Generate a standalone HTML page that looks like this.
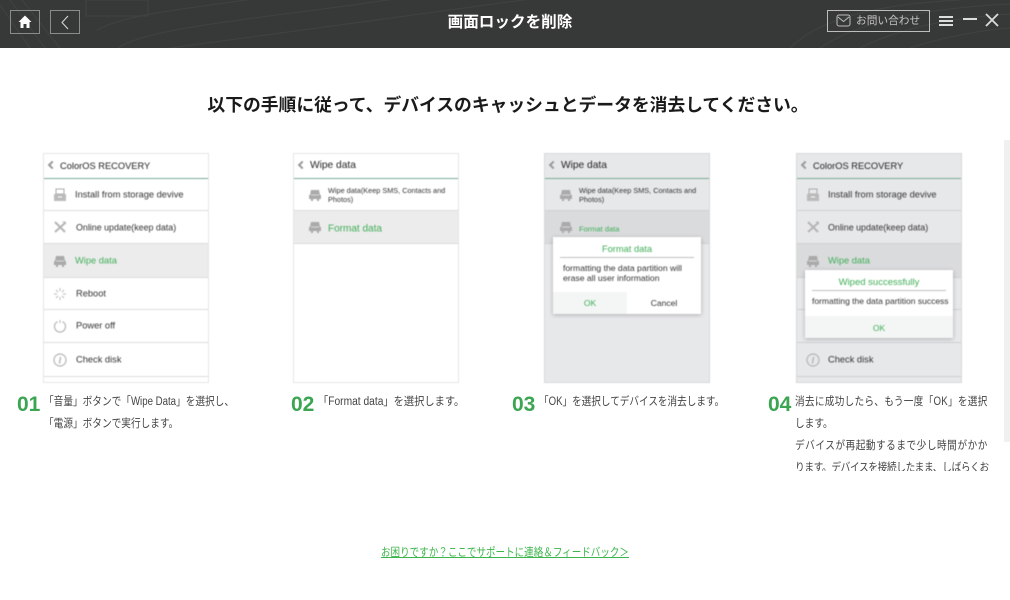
<!DOCTYPE html>
<html lang="ja"><head><meta charset="utf-8"><title>画面ロックを削除</title>
<style>
html,body{margin:0;padding:0;background:#fff}
body{width:1010px;height:600px;position:relative;overflow:hidden;font-family:"Liberation Sans","Noto Sans CJK JP",sans-serif;color:#333}
.a{position:absolute;white-space:nowrap}
.hdr{left:0;top:0;width:1010px;height:48px;background:#373938;overflow:hidden}
.btn{position:absolute;box-sizing:border-box;border:1px solid #8a8c8b;height:24px;top:10px;width:30px}
.ph{position:absolute;top:153px;width:166px;height:230px;box-sizing:border-box;border:1px solid #e6e6e6;background:#fff;overflow:hidden;filter:blur(.4px)}
.ph.g{background:#e7e8ea;border-color:#d8d9da}
.hd{position:absolute;left:0;right:0;top:0;height:24px;border-bottom:1px solid #79aa94}
.hd b{position:absolute;font-weight:400;left:16px;top:5px;font-size:9.300px;line-height:14px;color:#222;white-space:nowrap}
.hd i{position:absolute;left:5px;top:8px;width:4px;height:4px;border-left:2px solid #999;border-bottom:2px solid #999;transform:rotate(45deg)}
.r{position:absolute;left:0;right:0;border-bottom:1px solid #dcdcdc;box-sizing:border-box}
.r span{position:absolute;left:31px;top:50%;transform:translateY(-50%);font-size:9.300px;line-height:11px;color:#333;white-space:nowrap}
.r.on{background:#ececec}
.g .r{border-color:#cfd0d2}
.g .r.on{background:#dadbdd}
.r.on span{color:#3fae57;font-weight:400}
.r svg{position:absolute;left:9px;top:50%;margin-top:-7px}
.dlg{position:absolute;background:#fff;box-shadow:0 1px 4px rgba(0,0,0,.25)}
.dlg .t{position:absolute;left:0;right:0;text-align:center;color:#3fae57;font-size:9.300px;top:4px;line-height:14px}
.dlg .l{position:absolute;left:7px;right:7px;height:1px;background:#bfbfbf}
.dlg .m{position:absolute;font-size:8.600px;line-height:10px;color:#333;white-space:nowrap}
.dlg .o{position:absolute;background:#f4f6f5;color:#3fae57;font-size:8.500px;text-align:center}
.dlg .c{position:absolute;color:#333;font-size:8.500px;text-align:center}
.n{position:absolute;font-size:21px;font-weight:700;color:#3ba551;line-height:26px}
.s{position:absolute;font-size:11.500px;line-height:22px;color:#444;white-space:nowrap;transform-origin:0 0}
</style></head><body>
<svg width="0" height="0" style="position:absolute"><defs>
<symbol id="disk" viewBox="0 0 14 14"><path d="M3 2h8l1 5H2zM1 7h12v4H1zM3 11v2h2v-2M9 11v2h2v-2" fill="#aaa"/><path d="M3 7h8" stroke="#eee" stroke-width=".7"/></symbol>
<symbol id="inst" viewBox="0 0 14 14"><path d="M3 1h8v5H3z" fill="none" stroke="#aaa"/><path d="M1 6h12v7H1z" fill="#bbb"/><path d="M5 9h4" stroke="#fff"/></symbol>
<symbol id="tool" viewBox="0 0 14 14"><path d="M2 2l10 10M12 3L2 12" stroke="#b5b5b5" stroke-width="2" fill="none"/><path d="M9 1.500l3.500 0 1 3z" fill="#b5b5b5"/></symbol>
<symbol id="boot" viewBox="0 0 14 14"><path d="M7 1v3M7 10v3M1 7h3M10 7h3M3 3l2 2M9 9l2 2M11 3L9 5M5 9l-2 2" stroke="#bbb" fill="none"/></symbol>
<symbol id="pow" viewBox="0 0 14 14"><path d="M4.500 2.600a5.500 5.500 0 1 0 5 0" stroke="#b5b5b5" fill="none" stroke-width="1.200"/><path d="M7 1v3" stroke="#b5b5b5"/></symbol>
<symbol id="info" viewBox="0 0 14 14"><circle cx="7" cy="7" r="6" fill="none" stroke="#b5b5b5" stroke-width="1.200"/><path d="M7.600 4L6.400 10.500" stroke="#b5b5b5" stroke-width="1.400"/></symbol>
</defs></svg>

<div class="a hdr">
<svg width="1010" height="48" style="position:absolute;left:0;top:0" fill="none" stroke="#3f4440" stroke-width="1">
<path d="M86 0h62v16H86z"/><path d="M97 30C130 12 200 8 300 -8"/><path d="M118 48C150 25 300 15 420 -5"/><path d="M170 48C300 30 430 12 560 -5"/><path d="M0 5L30 48M10 0L45 48M22 0L60 48"/>
<path d="M820 48C860 20 930 8 1010 4"/><path d="M860 48C900 28 950 18 1010 14"/><path d="M790 48C820 18 880 4 960 0"/><path d="M910 48C940 38 980 30 1010 28"/>
</svg>
<div class="btn" style="left:10px"><svg width="28" height="22" viewBox="0 0 28 22" style="position:absolute;left:0;top:0"><path d="M14 4.500L7.500 11H9.500V17H12.500V13H15.500V17H18.500V11H20.500Z" fill="#fff"/></svg></div>
<div class="btn" style="left:50px"><svg width="28" height="22" viewBox="0 0 28 22" style="position:absolute;left:0;top:0"><path d="M17 5L11 11.500L17 18" fill="none" stroke="#ddd" stroke-width="1"/></svg></div>
<div class="a" style="left:5px;width:1010px;top:11px;text-align:center;color:#fff;font-size:15.600px;line-height:24px;font-weight:700">画面ロックを削除</div>
<div style="position:absolute;left:827px;top:10px;width:103px;height:22px;box-sizing:border-box;border:1px solid #bdbdbd"></div>
<svg width="16" height="14" style="position:absolute;left:836px;top:14px"><rect x="1" y="1" width="13" height="11" rx="2" fill="none" stroke="#bdbdbd"/><path d="M2 3l5.500 4.500L13 3" fill="none" stroke="#bdbdbd"/></svg>
<div class="a" style="left:856px;top:12px;font-size:10.700px;line-height:18px;color:#c4c4c4">お問い合わせ</div>
<div style="position:absolute;left:939px;top:16px;width:14px;height:2px;background:#ddd;box-shadow:0 4px 0 #ddd,0 8px 0 #ddd"></div>
<div style="position:absolute;left:963px;top:18px;width:14px;height:2px;background:#ddd"></div>
<svg width="14" height="14" style="position:absolute;left:985px;top:13px"><path d="M1 1l12 12M13 1L1 13" stroke="#ddd" stroke-width="1.800"/></svg>
</div>

<div class="a" style="left:3px;width:1010px;top:90px;text-align:center;font-size:17.800px;line-height:30px;font-weight:700;color:#1a1a1a">以下の手順に従って、デバイスのキャッシュとデータを消去してください。</div>

<div class="a" style="left:1004px;top:140px;width:6px;height:302px;background:#f0f0f0"></div>

<!-- phone 1 -->
<div class="ph" style="left:43px">
<div class="hd"><i></i><b>ColorOS RECOVERY</b></div>
<div class="r" style="top:25px;height:32px"><svg width="14" height="14"><use href="#inst"/></svg><span>Install from storage devive</span></div>
<div class="r" style="top:57px;height:33px"><svg width="14" height="14"><use href="#tool"/></svg><span style="left:32px;margin-top:1px;font-size:8.900px">Online update(keep data)</span></div>
<div class="r on" style="top:90px;height:34px"><svg width="14" height="14"><use href="#disk"/></svg><span>Wipe data</span></div>
<div class="r" style="top:124px;height:32px"><svg width="14" height="14"><use href="#boot"/></svg><span style="left:32px">Reboot</span></div>
<div class="r" style="top:156px;height:33px"><svg width="14" height="14"><use href="#pow"/></svg><span style="left:32px">Power off</span></div>
<div class="r" style="top:189px;height:34px"><svg width="14" height="14"><use href="#info"/></svg><span style="left:32px">Check disk</span></div>
</div>

<!-- phone 2 -->
<div class="ph" style="left:293px">
<div class="hd"><i></i><b style="left:16px;font-size:10.200px">Wipe data</b></div>
<div class="r" style="top:25px;height:32px"><svg width="14" height="14" style="left:14px"><use href="#disk"/></svg><span style="left:34px;font-size:7.300px;line-height:9px">Wipe data(Keep SMS, Contacts and<br>Photos)</span></div>
<div class="r on" style="top:57px;height:33px"><svg width="14" height="14" style="left:14px"><use href="#disk"/></svg><span style="left:34px;font-size:10px;margin-top:2px">Format data</span></div>
</div>

<!-- phone 3 -->
<div class="ph g" style="left:544px">
<div class="hd"><i></i><b style="left:16px;font-size:10.200px">Wipe data</b></div>
<div class="r" style="top:25px;height:32px"><svg width="14" height="14" style="left:14px"><use href="#disk"/></svg><span style="left:34px;font-size:7.300px;line-height:9px">Wipe data(Keep SMS, Contacts and<br>Photos)</span></div>
<div class="r on" style="top:57px;height:33px"><svg width="14" height="14" style="left:14px"><use href="#disk"/></svg><span style="left:34px;font-size:7.500px;margin-top:2px">Format data</span></div>
<div class="dlg" style="left:8px;top:83px;width:148px;height:77px">
<div class="t" style="top:5px">Format data</div><div class="l" style="top:20px"></div>
<div class="m" style="left:10px;top:26px">formatting the data partition will<br>erase all user information</div>
<div class="o" style="left:0;top:55px;width:74px;height:22px;line-height:23px">OK</div>
<div class="c" style="left:74px;top:55px;width:74px;height:22px;line-height:23px">Cancel</div>
</div>
</div>

<!-- phone 4 -->
<div class="ph g" style="left:796px">
<div class="hd"><i></i><b>ColorOS RECOVERY</b></div>
<div class="r" style="top:25px;height:32px"><svg width="14" height="14"><use href="#inst"/></svg><span>Install from storage devive</span></div>
<div class="r" style="top:57px;height:33px"><svg width="14" height="14"><use href="#tool"/></svg><span style="margin-top:1px;font-size:8.900px">Online update(keep data)</span></div>
<div class="r on" style="top:90px;height:34px"><svg width="14" height="14"><use href="#disk"/></svg><span>Wipe data</span></div>
<div class="r" style="top:124px;height:32px"></div>
<div class="r" style="top:156px;height:33px"></div>
<div class="r" style="top:189px;height:34px"><svg width="14" height="14"><use href="#info"/></svg><span>Check disk</span></div>
<div class="dlg" style="left:8px;top:116px;width:148px;height:68px">
<div class="t" style="top:6px;font-size:9.500px">Wiped successfully</div><div class="l" style="top:20px"></div>
<div class="m" style="left:7px;top:26px;font-size:8.500px">formatting the data partition success</div>
<div class="o" style="left:0;top:46px;width:148px;height:22px;line-height:24px">OK</div>
</div>
</div>

<!-- steps -->
<div class="n" style="left:17px;top:392px">01</div>
<div class="s" style="left:44px;top:391px;transform:scaleX(.84)">「音量」ボタンで「Wipe Data」を選択し、<br>「電源」ボタンで実行します。</div>
<div class="n" style="left:291px;top:392px">02</div>
<div class="s" style="left:318px;top:391px;transform:scaleX(.89)">「Format data」を選択します。</div>
<div class="n" style="left:512px;top:392px">03</div>
<div class="s" style="left:539px;top:391px;transform:scaleX(.835)">「OK」を選択してデバイスを消去します。</div>
<div class="n" style="left:768px;top:392px">04</div>
<div class="s" style="left:795px;top:391px;height:80px;overflow:hidden;transform:scaleX(.84)"><span style="letter-spacing:.3px">消去に成功したら、もう一度「OK」を選択</span><br>します。<br><span style="letter-spacing:.6px">デバイスが再起動するまで少し時間がかか</span><br><span style="letter-spacing:-.4px">ります。デバイスを接続したまま、しばらくお</span></div>

<div class="a" style="left:0;width:1010px;top:545px;text-align:center;font-size:11.500px;line-height:17px;color:#3cb54a;text-decoration:underline;transform:scaleX(.83)">お困りですか？ここでサポートに連絡＆フィードバック＞</div>
</body></html>
